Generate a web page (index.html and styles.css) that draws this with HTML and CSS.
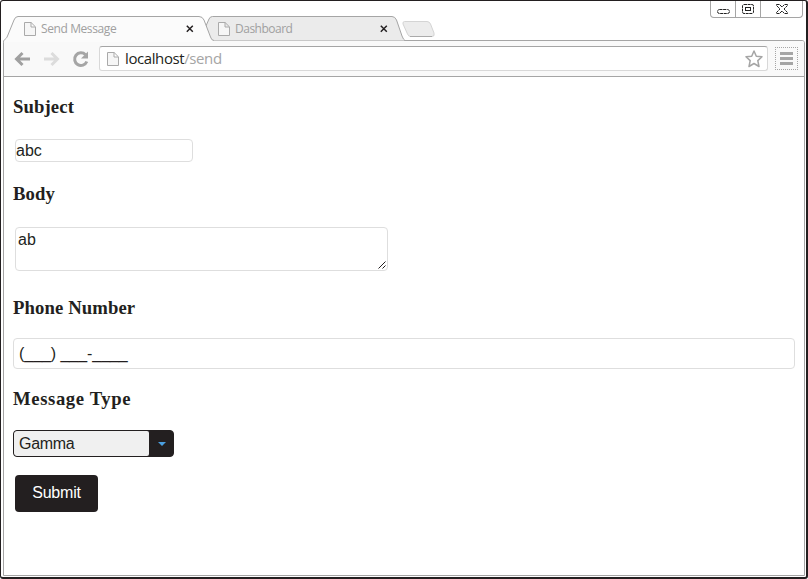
FILE: index.html
```html
<!DOCTYPE html>
<html lang="en">
<head>
<meta charset="utf-8">
<title>Send Message</title>
<link rel="stylesheet" href="styles.css">
</head>
<body>
<svg class="defs" width="0" height="0" aria-hidden="true">
  <symbol id="page" viewBox="0 0 12 14"><path d="M.5.5h6.600l4.400 4.400v8.600H.5zM7 .5V5h4.500" fill="#f6f6f6" stroke="#aaa"/></symbol>
  <symbol id="close" viewBox="0 0 8 8"><path d="M.8.8l6 6m0-6l-6 6" fill="none" stroke="#231f20" stroke-width="1.500"/></symbol>
</svg>
<div class="window">
  <header class="titlebar">
    <div class="tab tab-active">
      <svg class="shape" width="211" height="26"><path d="M0 26C0 23 3 24 4.500 20L11 4Q12.300.5 15 .5H196Q199.500.5 201 4L207.500 21Q208.500 24.500 211 24.500V26Z" fill="#fbfbfb"/><path d="M.5 26C.5 23 3 24 4.500 20L11 4Q12.300.5 15 .5H196Q199.500.5 201 4L207.500 21Q208.500 24.500 211 24.500" fill="none" stroke="#a5a5a5"/></svg>
      <svg class="icon" width="12" height="14"><use href="#page"/></svg>
      <span class="label">Send Message</span>
      <svg class="close" width="8" height="8"><use href="#close"/></svg>
    </div>
    <div class="tab tab-idle">
      <svg class="shape" width="202" height="26"><path d="M2.500 11L6 3Q7 .5 9.500 .5H189Q192 .5 193.500 4L199 20Q200.500 24.500 202 24.500H10Q8 24.500 6.500 20Z" fill="#ebebeb"/><path d="M2.500 11L6 3Q7 .5 9.500 .5H189Q192 .5 193.500 4L199 20Q200.500 24 202 24.500" fill="none" stroke="#a5a5a5"/></svg>
      <svg class="icon" width="12" height="14"><use href="#page"/></svg>
      <span class="label">Dashboard</span>
      <svg class="close" width="8" height="8"><use href="#close"/></svg>
    </div>
    <svg class="new-tab" width="33" height="17"><path d="M2.500 .5H25Q27.500 .5 28.500 3L32 12Q33 15.500 30 15.500H8.500Q6.500 15.500 5.500 13L1 3Q.5 .5 2.500 .5Z" fill="#ececec" stroke="#d4d4d4"/><path d="M8 15.500H30" stroke="#aaa"/></svg>
    <div class="controls">
      <span class="control"><svg width="13" height="6"><rect x=".5" y=".5" width="12" height="4" rx="2" fill="#fff" stroke="#222" stroke-dasharray="3 .6"/></svg></span>
      <span class="control"><svg width="12" height="10"><rect x=".5" y=".5" width="11" height="9" rx="1.500" fill="#fff" stroke="#222" stroke-dasharray="3 .6"/><rect x="3.500" y="3.500" width="5" height="3" fill="#fff" stroke="#222"/></svg></span>
      <span class="control control-close"><svg width="12" height="10"><path d="M.5.5h3L6 3 8.500.5h3v1L8 5l3.500 3.500v1h-3L6 7 3.500 9.500h-3v-1L4 5 .5 1.500z" fill="#fff" stroke="#222" stroke-dasharray="3 .5"/></svg></span>
    </div>
  </header>
  <div class="frame">
    <nav class="toolbar">
      <svg class="nav" width="76" height="18" fill="none" stroke-width="3"><path d="M16 9H3M8.500 3L2.500 9l6 6" stroke="#a0a0a0"/><path d="M30 9H43M37.500 3l6 6-6 6" stroke="#dcdcdc"/><path d="M71.500 4.800A6.300 6.300 0 1 0 72.800 11.500" stroke="#a5a5a5"/><path d="M74 1.500V8.500H67z" fill="#a5a5a5"/></svg>
      <div class="address">
        <svg class="icon" width="12" height="14"><use href="#page"/></svg>
        <span class="url">localhost<span class="path">/send</span></span>
        <svg class="star" width="18" height="18"><path d="M9 1L11.300 6.300 17 6.700 12.800 10.600 14 16.500 9 13.500 4 16.500 5.200 10.600 1 6.700 6.700 6.300z" fill="#fff" stroke="#a5a5a5" stroke-width="1.500" stroke-linejoin="round"/></svg>
      </div>
      <div class="menu"><svg width="13" height="13"><path d="M0 1.500H13M0 6.500H13M0 11.500H13" stroke="#a5a5a5" stroke-width="3"/></svg></div>
    </nav>
    <main class="form">
      <h3>Subject</h3>
      <div class="field subject">abc</div>
      <h3 class="body-title">Body</h3>
      <div class="field body">ab<svg class="grip" width="8" height="8"><path d="M.5 7.500L7.500.5M4.500 7.500L7.500 4.500" stroke="#231f20"/></svg></div>
      <h3 class="phone-title">Phone Number</h3>
      <div class="field phone">(___) ___-____</div>
      <h3 class="type-title">Message Type</h3>
      <div class="select"><span class="value">Gamma</span><span class="arrow"><svg width="8" height="4"><path d="M0 0H8L4 4z" fill="#4b9fe0"/></svg></span></div>
      <button class="submit" type="button">Submit</button>
    </main>
  </div>
</div>
</body>
</html>
```
FILE: styles.css
```css
* { box-sizing: border-box; }
body { margin: 0; background: #fff; font-family: "Liberation Sans", Arial, sans-serif; color: #231f20; }
svg { display: block; flex: none; }
.defs { position: absolute; }
.window { width: 808px; height: 579px; border: 1px solid #231f20; border-right-width: 2px; border-bottom-width: 2px; border-radius: 3px; padding: 0 1px 1px 2px; display: flex; flex-direction: column; }
.titlebar { height: 39px; padding-top: 15px; display: flex; flex: none; position: relative; }
.tab { position: relative; height: 24px; display: flex; align-items: center; font: 12px "Open Sans", sans-serif; color: #a0a0a0; }
.tab .shape { position: absolute; left: 0; top: 0; }
.tab .icon, .tab .label, .tab .close { position: relative; }
.tab .label { margin-left: 5px; padding-bottom: 1px; }
.tab .close { margin-left: auto; }
.tab-active { width: 200px; padding: 2px 9px 0 21px; z-index: 2; letter-spacing: -0.4px; }
.tab-idle { width: 199px; padding: 2px 14px 0 15px; z-index: 1; letter-spacing: -0.55px; }
.tab-idle .label { letter-spacing: -0.5px; }
.new-tab { margin-top: 5px; }
.controls { position: absolute; right: 2px; top: 0; display: flex; height: 17px; border: 1px solid #a5a5a5; border-top: 0; border-radius: 0 0 4px 4px; }
.control { width: 25px; display: flex; justify-content: center; align-items: center; border-right: 1px solid #a5a5a5; }
.control:first-child { padding-top: 5px; }
.control-close { width: 41px; border: 0; }
.frame { flex: 1; border: 1px solid #a5a5a5; border-radius: 3px 3px 0 0; display: flex; flex-direction: column; }
.toolbar { height: 36px; flex: none; background: #f9f9f9; border-bottom: 1px solid #a5a5a5; border-radius: 2px 2px 0 0; padding: 5px 6px 0 10px; display: flex; }
.nav { margin-top: 4px; }
.address { margin-left: 9px; width: 670px; height: 25px; border: 1px solid #d8d8d8; border-top-color: #a5a5a5; border-radius: 3px; background: #fff; display: flex; align-items: center; padding: 0 4px 0 7px; }
.url { margin-left: 6px; padding-bottom: 1px; font: 15px "Open Sans", sans-serif; letter-spacing: -0.4px; }
.path { color: #a5a5a5; }
.star { margin-left: auto; }
.menu { margin-left: 7px; margin-top: 1px; width: 23px; height: 23px; border: 1px dotted #a5a5a5; display: flex; align-items: center; justify-content: center; }
.form { padding: 19px 9px 0 9px; font-size: 16px; }
h3 { margin: 0; font: bold 18.72px/22px "Liberation Serif", "Times New Roman", serif; letter-spacing: 0.1px; }
.field { border: 1px solid #dedede; border-radius: 4px; }
.subject { margin: 21px 0 0 2px; width: 178px; height: 23px; line-height: 22px; }
.body-title { margin-top: 21px; }
.body { position: relative; margin: 22px 0 0 2px; width: 373px; height: 44px; padding: 2px; line-height: 20px; }
.grip { position: absolute; right: 1px; bottom: 1px; }
.phone-title { margin-top: 26px; }
.phone { margin-top: 19px; height: 31px; padding-left: 5px; line-height: 30px; letter-spacing: -0.05px; }
.type-title { margin-top: 19px; letter-spacing: 0.6px; }
.select { margin-top: 20px; width: 161px; height: 27px; border: 1px solid #231f20; border-radius: 4px; background: #231f20; display: flex; overflow: hidden; }
.value { width: 135px; padding-left: 5px; line-height: 25px; letter-spacing: -0.3px; background: #f0f0f0; border-radius: 2px; }
.arrow { flex: 1; display: flex; align-items: center; justify-content: center; padding-left: 2px; }
.submit { display: block; margin: 18px 0 0 2px; width: 83px; height: 37px; padding: 0 0 1px; border: 0; border-radius: 4px; background: #231f20; color: #fff; font: 16px "Liberation Sans", Arial, sans-serif; letter-spacing: -0.2px; }
```
